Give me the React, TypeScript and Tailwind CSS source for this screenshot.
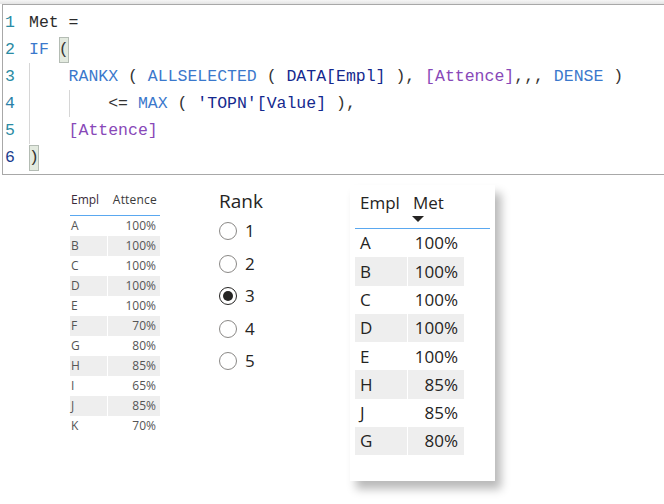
const KW = "text-[#3b78cc]";
const REF = "text-[#15298e]";
const MEA = "text-[#8848b8]";
const TXT = "text-[#333333]";

type Seg = { t: string; c?: string };

function Guide() {
  return <span className="inline-block w-[4ch] border-l border-[#d6d6d6]" />;
}

function Blank() {
  return <span className="inline-block w-[4ch]" />;
}

function Paren({ ch }: { ch: string }) {
  return (
    <span className="inline-block w-[1ch] h-[26px] leading-[26px] bg-[#e3eadf] shadow-[inset_0_0_0_1px_#b4bcb4] text-[#333333] self-center">
      {ch}
    </span>
  );
}

function CodeLine({
  n,
  numColor,
  indent,
  segs,
  children,
}: {
  n: number;
  numColor: string;
  indent?: ("g" | "b")[];
  segs?: Seg[];
  children?: React.ReactNode;
}) {
  return (
    <div className="flex h-[27px] items-stretch">
      <div className={`w-[26px] pl-[2px] leading-[27px] ${numColor}`}>{n}</div>
      {indent?.map((k, i) => (k === "g" ? <Guide key={i} /> : <Blank key={i} />))}
      {segs && (
        <span className="whitespace-pre leading-[27px]">
          {segs.map((s, i) => (
            <span key={i} className={s.c ?? TXT}>
              {s.t}
            </span>
          ))}
        </span>
      )}
      {children}
    </div>
  );
}

function CodeBox() {
  return (
    <div className="ml-[2px] h-[171px] border-y border-l border-[#a8a8a8] pt-[4px] bg-white font-['Liberation_Mono',monospace] text-[16.5px]">
      <CodeLine n={1} numColor="text-[#2a8ba3]" segs={[{ t: "Met =", c: "text-[#2b2b2b]" }]} />
      <CodeLine n={2} numColor="text-[#2a8ba3]">
        <span className={`whitespace-pre leading-[27px] ${KW}`}>IF </span>
        <Paren ch="(" />
      </CodeLine>
      <CodeLine
        n={3}
        numColor="text-[#2a8ba3]"
        indent={["g"]}
        segs={[
          { t: "RANKX", c: KW },
          { t: " ( " },
          { t: "ALLSELECTED", c: KW },
          { t: " ( " },
          { t: "DATA[Empl]", c: REF },
          { t: " ), " },
          { t: "[Attence]", c: MEA },
          { t: ",,, " },
          { t: "DENSE", c: KW },
          { t: " )" },
        ]}
      />
      <CodeLine
        n={4}
        numColor="text-[#2a7fa8]"
        indent={["g", "g"]}
        segs={[
          { t: "<= " },
          { t: "MAX", c: KW },
          { t: " ( " },
          { t: "'TOPN'[Value]", c: REF },
          { t: " )," },
        ]}
      />
      <CodeLine n={5} numColor="text-[#2a8ba3]" indent={["g"]} segs={[{ t: "[Attence]", c: MEA }]} />
      <CodeLine n={6} numColor="text-[#1c3d8e]">
        <Paren ch=")" />
      </CodeLine>
    </div>
  );
}

const small = [
  ["A", "100%"],
  ["B", "100%"],
  ["C", "100%"],
  ["D", "100%"],
  ["E", "100%"],
  ["F", "70%"],
  ["G", "80%"],
  ["H", "85%"],
  ["I", "65%"],
  ["J", "85%"],
  ["K", "70%"],
];

const met = [
  ["A", "100%"],
  ["B", "100%"],
  ["C", "100%"],
  ["D", "100%"],
  ["E", "100%"],
  ["H", "85%"],
  ["J", "85%"],
  ["G", "80%"],
];

function SmallTable() {
  return (
    <div className="mt-[15px] ml-[70px] w-[90px] font-['Open_Sans',sans-serif] text-[12px]">
      <div className="flex border-b border-[#5aa8f0] h-[26px] items-start pt-[1px]">
        <div className="w-[37px] pl-[1px] leading-[18px] text-[#3a2a3a]">Empl</div>
        <div className="w-[53px] pr-[3px] text-right leading-[18px] text-[#3a3a3a] tracking-[0.2px]">Attence</div>
      </div>
      {small.map(([e, v], i) => (
        <div key={e} className="flex h-[20px] leading-[20px] text-[#555555]">
          <div className={`w-[37px] pl-[1px] ${i % 2 ? "bg-[#eeeeee]" : ""}`}>{e}</div>
          <div className={`ml-[1px] w-[52px] pr-[4px] text-right ${i % 2 ? "bg-[#eeeeee]" : ""}`}>{v}</div>
        </div>
      ))}
    </div>
  );
}

function Slicer() {
  return (
    <div className="mt-[14px] ml-[59px] w-[131px] font-['Open_Sans',sans-serif] text-[#252423]">
      <div className="text-[19px] leading-[25px] mb-[1px]">Rank</div>
      {[1, 2, 3, 4, 5].map((n) => (
        <div key={n} className="flex items-center h-[32.5px]">
          {n === 3 ? (
            <span className="flex items-center justify-center w-[18px] h-[18px] rounded-full border-[1.5px] border-[#252423]">
              <span className="w-[10px] h-[10px] rounded-full bg-[#252423]" />
            </span>
          ) : (
            <span className="w-[18px] h-[18px] rounded-full border border-[#8a8886]" />
          )}
          <span className="ml-[8px] text-[17px] leading-[20px]">{n}</span>
        </div>
      ))}
    </div>
  );
}

function MetCard() {
  return (
    <div className="mt-[10px] w-[145px] h-[296px] bg-white px-[5px] pt-[7px] shadow-[6px_8px_9px_rgba(0,0,0,0.28)] font-['Open_Sans',sans-serif] text-[#252423]">
      <div className="flex border-b border-[#5aa8f0] h-[37px]">
        <div className="w-[52px] pl-[5px] text-[17px] leading-[22px]">Empl</div>
        <div className="ml-[1px] w-[56px] pl-[5px]">
          <div className="text-[17px] leading-[22px]">Met</div>
          <svg width="12" height="7" viewBox="0 0 12 7" className="mt-[2px] ml-[-1px]">
            <path d="M0 0 L12 0 L6 6 Z" fill="#252423" />
          </svg>
        </div>
      </div>
      {met.map(([e, v], i) => (
        <div key={e} className="flex h-[28.3px] items-center text-[17px]">
          <div className={`w-[52px] h-full flex items-center pl-[5px] ${i % 2 ? "bg-[#eeeeee]" : ""}`}>{e}</div>
          <div
            className={`ml-[1px] w-[56px] h-full flex items-center justify-end pr-[6px] ${i % 2 ? "bg-[#eeeeee]" : ""}`}
          >
            {v}
          </div>
        </div>
      ))}
    </div>
  );
}

export default function App() {
  return (
    <div className="w-[664px] h-[504px] overflow-hidden bg-white">
      <div className="h-[4px] bg-gradient-to-b from-[#f6f6f6] to-[#e4e4e4]" />
      <CodeBox />
      <div className="flex items-start">
        <SmallTable />
        <Slicer />
        <MetCard />
      </div>
    </div>
  );
}
